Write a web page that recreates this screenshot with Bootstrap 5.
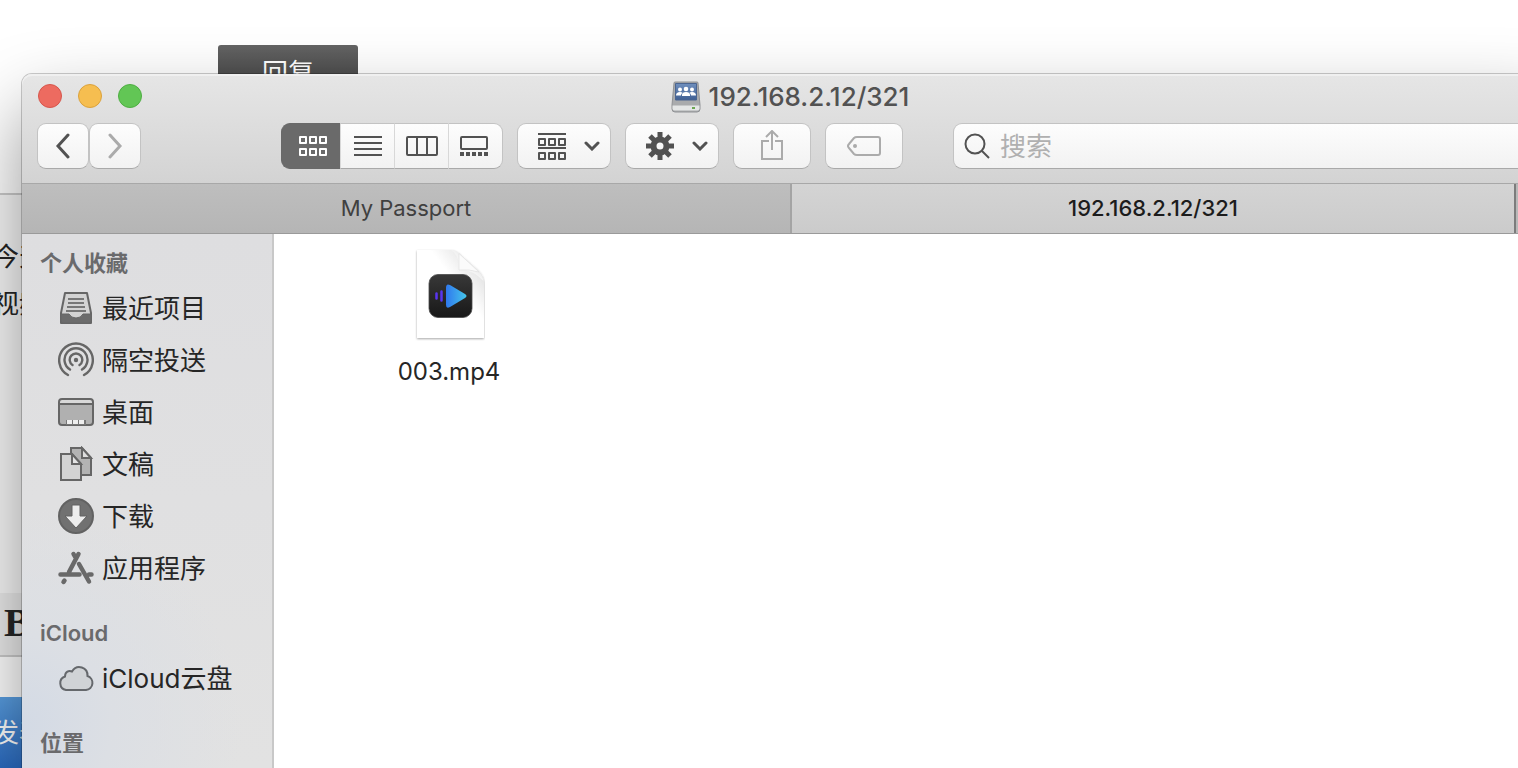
<!DOCTYPE html>
<html lang="zh-CN">
<head>
<meta charset="utf-8">
<meta name="viewport" content="width=device-width, initial-scale=1">
<title>192.168.2.12/321</title>
<link href="https://cdn.jsdelivr.net/npm/bootstrap@5.3.0/dist/css/bootstrap.min.css" rel="stylesheet">
<style>
  body { font-family: Inter, "Noto Sans CJK SC", sans-serif; background: #fff; color: #262626; }
  .desktop { height: 100vh; }
  button { font-family: inherit; }
  svg { display: block; flex: none; }

  /* web page behind the window */
  .reply-btn { width: 140px; height: 52px; margin: 45px 0 0 218px; border-radius: 3px; font-size: 26px; line-height: 56px; background: linear-gradient(#646464, #3c3c3c); }
  .editor { margin-top: 96px; height: 400px; border-top: 2px solid #ccc; padding-top: 38px; font-size: 26px; line-height: 47px; background: #f8f8f8; }
  .editor p, .post-btn { text-indent: -7px; }
  .format-bar { height: 64px; border-bottom: 2px solid #ccc; background: #ececec; }
  .format-bar button { font: bold 40px/60px "Liberation Serif", serif; color: #262626; padding-left: 4px; }
  .post-btn { margin-top: 40px; width: 150px; height: 71px; border-top: 2px solid #2f76c4; font-size: 26px; background: linear-gradient(#5a9fe2, #2a6ac0); }

  /* Finder window */
  .finder { top: 74px; left: 22px; right: -40px; bottom: 0; border-radius: 10px 10px 0 0; background: #fff; box-shadow: 0 0 0 1px rgba(0,0,0,.2), 0 36px 76px rgba(0,0,0,.42); }
  .titlebar { height: 109px; background: linear-gradient(#e6e6e6, #d3d3d3); box-shadow: inset 0 2px 0 #f0f0f0; border-radius: 10px 10px 0 0; }
  .title-row { height: 44px; padding: 2px 16px 0; font-size: 26px; line-height: 40px; font-weight: 500; color: #525252; }
  .lights { top: 10px; left: 16px; gap: 16px; }
  .lights button { width: 24px; height: 24px; border: 1px solid; }
  .light-close { background: #ed6b60; border-color: #d6564c !important; }
  .light-min { background: #f6be50; border-color: #dba23c !important; }
  .light-zoom { background: #62c655; border-color: #4eae42 !important; }

  .tools { padding: 5px 0 0 15px; }
  .tool { height: 46px; border: 1px solid #c3c3c3; border-bottom-color: #a9a9a9; border-radius: 9px; background: linear-gradient(#fdfdfd, #f2f2f2); color: #525252; display: flex; align-items: center; justify-content: center; padding: 0; }
  .tool-nav { width: 52px; }
  .tool-menu { width: 94px; gap: 18px; padding-left: 10px; margin-right: 14px; }
  .tool-wide { width: 78px; margin-right: 14px; color: #ababab; }
  .views { margin: 0 14px 0 140px; }
  .views .tool { width: 54px; border-left-color: #d8d8d8; border-right-width: 0; border-radius: 0; }
  .views .tool:first-child { width: 59px; border-color: #696969; background: #6a6a6a; color: #fff; border-radius: 9px 0 0 9px; padding-left: 3px; }
  .views .tool:last-child { width: 55px; border-right-width: 1px; border-radius: 0 9px 9px 0; padding-right: 4px; }
  .search { margin-left: 36px; justify-content: flex-start; padding-left: 10px; gap: 10px; border-radius: 9px 0 0 9px; }
  .search input { font-size: 26px; line-height: 36px; margin-top: 2px; }
  .search input::placeholder { color: #b0b0b0; opacity: 1; }

  .tab-row { height: 51px; border-top: 1px solid #a8a8a8; border-bottom: 1px solid #9a9a9a; font-size: 22px; }
  .tab-row button { border: 0; }
  .tab-back { background: linear-gradient(#bebebe, #b5b5b5); color: #404040; }
  .tab-front { background: linear-gradient(#d4d4d4, #cbcbcb); color: #1c1c1c; font-weight: 500; border-left: 2px solid #a4a4a4 !important; }
  .tab-new { width: 44px; background: #b8b8b8; border-left: 2px solid #7c7c7c !important; }

  .side { width: 252px; border-right: 2px solid #c8c8c8; padding: 9px 0 0 18px; background: radial-gradient(circle at 0 92%, #d3dae5, #dcdfe4 90px, rgba(224,224,225,0) 220px), linear-gradient(#dedee0, #e2e2e2); }
  .side h2 { height: 40px; line-height: 40px; font-size: 22px; font-weight: 600; color: #6a6a6c; margin: 0; }
  .side ul { margin: 0 0 18px; }
  .side a { height: 52px; padding-left: 18px; gap: 8px; font-size: 26px; line-height: 36px; color: #262626; }
  .side svg { margin-bottom: 2px; }
  .files { padding: 14px 0 0 104px; }
  .file { width: 142px; font-size: 24px; line-height: 30px; color: #262626; }
  .file span { margin-top: 15px; }
</style>
</head>
<body>
<div class="desktop position-relative overflow-hidden">
  <main>
    <button class="reply-btn btn text-white border-0 p-0 d-block">回复</button>
    <div class="editor"><p class="m-0">今天</p><p class="m-0">视频</p></div>
    <div class="format-bar"><button class="border-0 bg-transparent py-0" aria-label="粗体">B</button></div>
    <button class="post-btn border-0 text-white text-start p-0 d-block">发表</button>
  </main>

  <section class="finder position-absolute d-flex flex-column" aria-label="Finder">
    <header class="titlebar">
      <div class="title-row position-relative d-flex justify-content-center">
        <div class="lights position-absolute d-flex">
          <button class="light-close rounded-circle p-0" aria-label="关闭"></button>
          <button class="light-min rounded-circle p-0" aria-label="最小化"></button>
          <button class="light-zoom rounded-circle p-0" aria-label="缩放"></button>
        </div>
        <div class="d-flex align-items-center gap-2">
          <svg width="30" height="32" viewBox="0 0 30 32">
            <defs><linearGradient id="disk" x2="0" y2="1"><stop stop-color="#6f8fbd"/><stop offset="1" stop-color="#3f5f93"/></linearGradient></defs>
            <path d="M4 1h22q1 0 1 1l2 22v4q0 3-3 3H4q-3 0-3-3v-4L3 2q0-1 1-1z" fill="#a9abad" stroke="#909295"/>
            <path d="M1.500 24.500h27v3q0 2-2 2h-23q-2 0-2-2z" fill="#e4e6e6"/>
            <path d="M4.500 2.500h21v16.500h-21z" fill="url(#disk)" stroke="#4b6590"/>
            <g fill="#fff"><circle cx="9" cy="8.500" r="2"/><circle cx="15" cy="8" r="2.300"/><circle cx="21" cy="8.500" r="2"/><path d="M5 14.500q0-3.500 4-3.500 2 0 2.500.700-1.500 1-1.500 2.800zM11 15v-1q0-3 4-3t4 3v1zM25 14.500q0-3.500-4-3.500-2 0-2.500.700 1.500 1 1.500 2.800z"/></g>
            <path d="M21 27h3" stroke="#6ca653" stroke-width="2"/>
          </svg>
          <span>192.168.2.12/321</span>
        </div>
      </div>
      <div class="tools d-flex">
        <button class="tool tool-nav" aria-label="后退"><svg width="16" height="26" viewBox="0 0 16 26" fill="none" stroke="currentColor" stroke-width="3" stroke-linecap="round"><path d="M13 2 3 13l10 11"/></svg></button>
        <button class="tool tool-nav" aria-label="前进"><svg width="16" height="26" viewBox="0 0 16 26" fill="none" stroke="#ababab" stroke-width="3" stroke-linecap="round"><path d="m3 2 10 11L3 24"/></svg></button>
        <div class="views d-flex" role="group" aria-label="显示方式">
          <button class="tool" aria-label="图标"><svg width="28" height="20" viewBox="0 0 28 20" fill="none" stroke="currentColor" stroke-width="2"><path d="M1 1h6v6H1zM11 1h6v6h-6zM21 1h6v6h-6zM1 13h6v6H1zM11 13h6v6h-6zM21 13h6v6h-6z" stroke-linejoin="round"/></svg></button>
          <button class="tool" aria-label="列表"><svg width="28" height="20" viewBox="0 0 28 20" stroke="currentColor" stroke-width="2"><path d="M0 1h28M0 7h28M0 13h28M0 19h28"/></svg></button>
          <button class="tool" aria-label="分栏"><svg width="32" height="20" viewBox="0 0 32 20" fill="none" stroke="currentColor" stroke-width="2"><rect x="1" y="1" width="30" height="18" rx="1"/><path d="M11 1v18M21 1v18"/></svg></button>
          <button class="tool" aria-label="画廊"><svg width="28" height="20" viewBox="0 0 28 20" fill="none" stroke="currentColor" stroke-width="2"><rect x="1" y="1" width="26" height="12" rx="1"/><path d="M0 18h28" stroke-width="4" stroke-dasharray="4 2"/></svg></button>
        </div>
        <button class="tool tool-menu" aria-label="排列">
          <svg width="28" height="28" viewBox="0 -2 28 28" fill="none" stroke="currentColor" stroke-width="2"><path d="M0 0h28M0 14h28"/><path d="M1 5h6v6H1zM11 5h6v6h-6zM21 5h6v6h-6zM1 19h6v6H1zM11 19h6v6h-6zM21 19h6v6h-6z" stroke-linejoin="round"/></svg>
          <svg width="16" height="10" viewBox="0 0 16 10" fill="none" stroke="currentColor" stroke-width="3" stroke-linecap="round"><path d="m2 2 6 6 6-6"/></svg>
        </button>
        <button class="tool tool-menu" aria-label="操作">
          <svg width="28" height="28" viewBox="-14 -14 28 28" fill="none" stroke="currentColor"><circle r="6.500" stroke-width="6"/><path d="M0-14V-8M0 14V8M-14 0h6M14 0H8M-10-10l4 4M10-10l-4 4M-10 10l4-4M10 10l-4-4" stroke-width="5"/></svg>
          <svg width="16" height="10" viewBox="0 0 16 10" fill="none" stroke="currentColor" stroke-width="3" stroke-linecap="round"><path d="m2 2 6 6 6-6"/></svg>
        </button>
        <button class="tool tool-wide" aria-label="共享"><svg width="24" height="32" viewBox="0 0 24 32" fill="none" stroke="currentColor" stroke-width="2"><path d="M9 11H2v18h20V11h-7M12 20V1M6 7l6-6 6 6"/></svg></button>
        <button class="tool tool-wide" aria-label="标记"><svg width="34" height="20" viewBox="0 0 34 20" fill="none" stroke="currentColor" stroke-width="2"><path d="M10 1h21q2 0 2 2v14q0 2-2 2H10q-2 0-3-1l-5-6q-2-2 0-4l5-6q1-1 3-1z"/><circle cx="8" cy="10" r="2" fill="currentColor" stroke="none"/></svg></button>
        <label class="tool search flex-grow-1">
          <svg width="26" height="26" viewBox="0 0 26 26" fill="none" stroke="currentColor" stroke-width="2"><circle cx="11" cy="11" r="9.500"/><path d="m18 18 7 7"/></svg>
          <input class="border-0 bg-transparent p-0 flex-grow-1" type="search" placeholder="搜索" aria-label="搜索">
        </label>
      </div>
    </header>

    <div class="tab-row d-flex" role="tablist">
      <button class="tab-back w-50 p-0" role="tab" aria-selected="false">My Passport</button>
      <div class="w-50 d-flex">
        <button class="tab-front flex-grow-1 p-0" role="tab" aria-selected="true">192.168.2.12/321</button>
        <button class="tab-new p-0" aria-label="新标签页"></button>
      </div>
    </div>

    <div class="d-flex flex-grow-1 overflow-hidden">
      <nav class="side flex-shrink-0">
        <h2>个人收藏</h2>
        <ul class="list-unstyled">
          <li><a class="d-flex align-items-center text-decoration-none" href="#">
            <svg width="36" height="36" viewBox="0 0 36 36" stroke="#666" stroke-width="2"><path d="M7 3h22l4 20v10H3V23z" fill="#d3d3d3" stroke-linejoin="round"/><path d="M3 24h8q2 4 7 4t7-4h8v7q0 2-2 2H5q-2 0-2-2z" fill="#6c6c6c" stroke-width="1"/><path d="M10 9h16M10 13h16M9 17h18M8 21h20" stroke="#777"/></svg>最近项目</a></li>
          <li><a class="d-flex align-items-center text-decoration-none" href="#">
            <svg width="36" height="36" viewBox="0 0 36 36" fill="none" stroke="#666" stroke-width="2.400" stroke-linecap="round"><path d="M10 33a16.800 16.800 0 1 1 16 0M12 27.500a11.500 11.500 0 1 1 12 0M14.500 23a6.300 6.300 0 1 1 7 0"/><circle cx="18" cy="18" r="2.200" fill="#666" stroke="none"/></svg>隔空投送</a></li>
          <li><a class="d-flex align-items-center text-decoration-none" href="#">
            <svg width="36" height="36" viewBox="0 0 36 36"><rect x="1" y="5" width="34" height="26" rx="3" fill="#b0b0b0"/><path d="M2 6h32v3H2z" fill="#d8d8d8"/><rect x="1" y="5" width="34" height="26" rx="3" fill="none" stroke="#666" stroke-width="2"/><path d="M2 10h32" stroke="#666" stroke-width="2"/><path d="M8 26h20v5H8z" fill="#777"/><path d="M9 28h18" stroke="#eee" stroke-width="4" stroke-dasharray="5 1"/></svg>桌面</a></li>
          <li><a class="d-flex align-items-center text-decoration-none" href="#">
            <svg width="36" height="36" viewBox="0 0 36 36" stroke="#666" stroke-width="2"><path d="M13 2h11l9 10v17H13z" fill="#b3b3b3"/><path d="M24 2v10h9z" fill="#ddd"/><path d="M3 8h11l9 10v16H3z" fill="#d3d3d3"/><path d="M14 8v10h9z" fill="#e3e3e3"/></svg>文稿</a></li>
          <li><a class="d-flex align-items-center text-decoration-none" href="#">
            <svg width="36" height="36" viewBox="0 0 36 36"><circle cx="18" cy="18" r="17" fill="#717171" stroke="#626262" stroke-width="2"/><path d="M14 7h8v11h7L18 30 7 18h7z" fill="#ededed" stroke="#626262"/></svg>下载</a></li>
          <li><a class="d-flex align-items-center text-decoration-none" href="#">
            <svg width="36" height="36" viewBox="0 0 36 36" fill="none" stroke="#696969" stroke-width="4.500" stroke-linecap="round"><path d="M20.500 4 11 22M2.500 24.500h19M31 24.500h2.500M15.500 4l2 3.500M21 14l10 17.500M6.500 30.500l-1 1.500"/></svg>应用程序</a></li>
        </ul>
        <h2>iCloud</h2>
        <ul class="list-unstyled">
          <li><a class="d-flex align-items-center text-decoration-none" href="#">
            <svg width="36" height="36" viewBox="0 0 36 36" fill="#d0d3d6" stroke="#65686c" stroke-width="2"><path d="M8 30a7 7 0 0 1-1-13.500c0-5 4-6.500 7-5 5-8 16-4 15.500 4.500A7.200 7.200 0 0 1 28 30z"/></svg>iCloud云盘</a></li>
        </ul>
        <h2>位置</h2>
      </nav>
      <div class="files flex-grow-1">
        <a class="file d-flex flex-column align-items-center text-decoration-none" href="#">
          <svg width="72" height="94" viewBox="0 0 72 94">
            <defs>
              <linearGradient id="tile" x2="0" y2="1"><stop stop-color="#383838"/><stop offset="1" stop-color="#181818"/></linearGradient>
              <linearGradient id="play" x2="1"><stop stop-color="#2f78ee"/><stop offset="1" stop-color="#45c6ea"/></linearGradient>
              <linearGradient id="fold" x1="0" y1="1" x2="1" y2="0"><stop stop-color="#fff"/><stop offset=".5" stop-color="#f4f4f4"/><stop offset="1" stop-color="#ccc"/></linearGradient>
              <linearGradient id="sheet" x1="0" y1="1" x2="1" y2="0"><stop offset=".6" stop-color="#fff"/><stop offset=".85" stop-color="#e4e4e4"/></linearGradient>
              <filter id="soft" x="-20%" y="-20%" width="140%" height="140%"><feDropShadow dx="0" dy="1" stdDeviation="1" flood-opacity=".35"/></filter>
            </defs>
            <path d="M4 2h34q5 0 10 5l17 15q6 6 6 13v55H4z" fill="url(#sheet)" filter="url(#soft)"/>
            <path d="M38 2q8 4 8.500 20 13-1 24 11-1-6-6-11L48 7q-5-5-10-5z" fill="url(#fold)"/>
            <path d="M46 5.500V22q10-1 20 2z" fill="#fbfbfb" stroke="#ddd" stroke-width=".6"/>
            <rect x="16" y="26.500" width="43" height="43" rx="9" fill="url(#tile)" stroke="#4a4a4a" stroke-width=".8"/>
            <path d="M33 40q0-5 4-3l15 9q3 2 0 4l-15 9q-4 2-4-2z" fill="url(#play)"/>
            <path d="M28.500 43.500v9M23.500 45.500v5" stroke="#5a35ef" stroke-width="2.500" stroke-linecap="round"/>
          </svg>
          <span>003.mp4</span>
        </a>
      </div>
    </div>
  </section>
</div>
<script src="https://cdn.jsdelivr.net/npm/bootstrap@5.3.0/dist/js/bootstrap.bundle.min.js"></script>
</body>
</html>
